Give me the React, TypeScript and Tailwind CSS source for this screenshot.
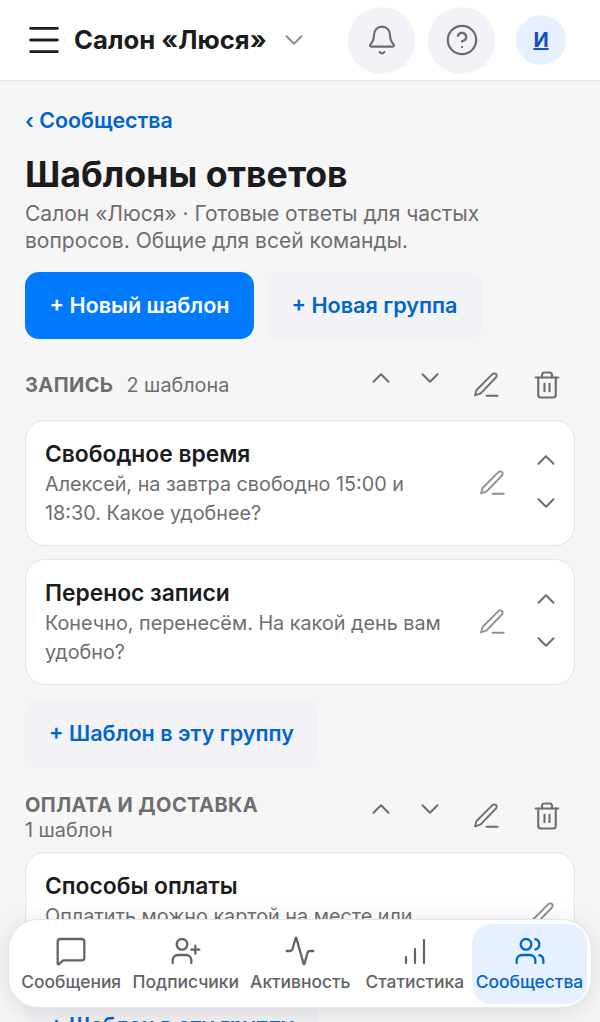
import { Bell, ChevronDown, ChevronUp, CircleHelp, Menu, MessageSquare, Trash2, UserPlus, Users, Activity } from 'lucide-react';

function Pencil({ className }: { className: string }) {
  return (
    <svg viewBox="0 0 24 24" fill="none" stroke="currentColor" strokeWidth="1.6" strokeLinecap="round" strokeLinejoin="round" className={className}>
      <path d="M17.5 2.6a2.1 2.1 0 0 1 3 3L7.4 19.2 2.6 21l1.3-4.7z" />
      <path d="M12.5 21.2h9.5" />
    </svg>
  );
}

function GroupActions({ className = '' }: { className?: string }) {
  return (
    <div className={`flex items-center text-[#6e6e70] ${className}`}>
      <ChevronUp className="w-[30px] h-[30px] mr-[19px] -mt-[14px]" strokeWidth={1.6} />
      <ChevronDown className="w-[30px] h-[30px] mr-[27px] -mt-[14px]" strokeWidth={1.6} />
      <Pencil className="w-[28px] h-[28px] mr-[32px]" />
      <Trash2 className="w-[30px] h-[30px]" strokeWidth={1.7} />
    </div>
  );
}

function TemplateCard({ title, text, sortable = true }: { title: string; text: string; sortable?: boolean }) {
  return (
    <div className="flex items-center bg-white border border-[#e5e5ea] rounded-[20px] pl-[19px] pr-[13px] h-[126px] mb-[13px]">
      <div className="flex-1 min-w-0 pt-[2px]">
        <div className="text-[22.8px] leading-[28px] font-semibold text-[#1c1c1e]">{title}</div>
        <div className="text-[19.8px] leading-[29px] text-[#6e6e70] mt-[2px] w-[405px]">{text}</div>
      </div>
      <Pencil className={`w-[28px] h-[28px] text-[#8e8e93] shrink-0 ${sortable ? 'mr-[25px]' : 'mr-[5px]'}`} />
      {sortable && (
        <div className="flex flex-col gap-[13px] text-[#6e6e70] shrink-0 -mt-[4px]">
          <ChevronUp className="w-[30px] h-[30px]" strokeWidth={1.6} />
          <ChevronDown className="w-[30px] h-[30px]" strokeWidth={1.6} />
        </div>
      )}
    </div>
  );
}

function NavItem({ label, active, children }: { label: string; active?: boolean; children: React.ReactNode }) {
  return (
    <div className={`flex flex-col items-center justify-center h-[80px] rounded-[20px] ${active ? 'bg-[#e6f0ff] text-[#0066cc] w-[115px]' : 'text-[#636366] flex-1'}`}>
      {children}
      <span className="text-[17.4px] leading-[20px] font-medium mt-[5px] whitespace-nowrap">{label}</span>
    </div>
  );
}

export default function App() {
  return (
    <div className="relative w-[600px] h-[1022px] overflow-hidden bg-[#f6f6f6] font-['Inter',sans-serif]">
      <header className="flex items-center h-[81px] bg-white border-b border-[#e5e5ea] pl-[24px] pr-[34px]">
        <Menu className="w-[40px] h-[40px] text-[#1c1c1e]" strokeWidth={1.7} />
        <span className="ml-[10px] text-[25.7px] font-bold text-[#1c1c1e] whitespace-nowrap">Салон «Люся»</span>
        <ChevronDown className="ml-[12px] w-[30px] h-[30px] text-[#8e8e93]" strokeWidth={1.6} />
        <div className="ml-auto flex items-center">
          <div className="flex items-center justify-center w-[67px] h-[67px] rounded-full bg-[#f2f2f7] text-[#6e6e70]">
            <Bell className="w-[32px] h-[32px]" strokeWidth={1.6} />
          </div>
          <div className="flex items-center justify-center w-[67px] h-[67px] rounded-full bg-[#f2f2f7] text-[#6e6e70] ml-[13px]">
            <CircleHelp className="w-[34px] h-[34px]" strokeWidth={1.6} />
          </div>
          <div className="flex items-center justify-center w-[50px] h-[50px] rounded-full bg-[#e6f0ff] ml-[21px] text-[20px] font-bold text-[#1a4fc4] underline">
            И
          </div>
        </div>
      </header>

      <main className="px-[25px] pt-[25px]">
        <div className="text-[21.4px] leading-[28px] font-semibold text-[#0066cc]">‹ Сообщества</div>
        <h1 className="mt-[19px] text-[35.7px] leading-[42px] font-bold text-[#1c1c1e]">Шаблоны ответов</h1>
        <p className="mt-[5px] text-[21px] leading-[27px] text-[#6e6e70] max-w-[500px]">
          Салон «Люся» · Готовые ответы для частых вопросов. Общие для всей команды.
        </p>

        <div className="flex gap-[13px] mt-[18px]">
          <button className="h-[67px] w-[229px] rounded-[14px] bg-[#007aff] text-white text-[21.6px] font-semibold">+ Новый шаблон</button>
          <button className="h-[67px] w-[215px] rounded-[14px] bg-[#f2f2f7] text-[#0066cc] text-[21.6px] font-semibold">+ Новая группа</button>
        </div>

        <div className="flex items-center justify-between mt-[27px] h-[38px] pr-[13px]">
          <div className="flex items-baseline">
            <span className="text-[20px] font-bold text-[#6e6e70] tracking-[0.4px]">ЗАПИСЬ</span>
            <span className="ml-[13px] text-[19.8px] text-[#6e6e70]">2 шаблона</span>
          </div>
          <GroupActions />
        </div>

        <div className="mt-[16px]">
          <TemplateCard title="Свободное время" text="Алексей, на завтра свободно 15:00 и 18:30. Какое удобнее?" />
          <TemplateCard title="Перенос записи" text="Конечно, перенесём. На какой день вам удобно?" />
        </div>

        <button className="mt-[1px] h-[68px] w-[293px] rounded-[14px] bg-[#f2f2f7] text-[#0066cc] text-[21.6px] font-semibold">+ Шаблон в эту группу</button>

        <div className="flex items-start justify-between mt-[26px] pr-[13px]">
          <div>
            <div className="text-[20px] leading-[24px] font-bold text-[#6e6e70] tracking-[0.4px]">ОПЛАТА И ДОСТАВКА</div>
            <div className="text-[19.8px] leading-[26px] text-[#6e6e70]">1 шаблон</div>
          </div>
          <GroupActions className="mt-[8px]" />
        </div>

        <div className="mt-[9px]">
          <TemplateCard title="Способы оплаты" text="Оплатить можно картой на месте или переводом." sortable={false} />
        </div>

        <button className="h-[68px] w-[293px] rounded-[14px] bg-[#f2f2f7] text-[#0066cc] text-[21.6px] font-semibold">+ Шаблон в эту группу</button>
      </main>

      <nav className="absolute left-[8px] top-[919px] flex items-center w-[584px] h-[89px] bg-white rounded-[30px] border border-[#e5e5ea] shadow-[0_4px_24px_rgba(0,0,0,0.12)] pl-[5px] pr-[4px]">
        <NavItem label="Сообщения">
          <MessageSquare className="w-[32px] h-[32px]" strokeWidth={1.7} />
        </NavItem>
        <NavItem label="Подписчики">
          <UserPlus className="w-[32px] h-[32px]" strokeWidth={1.7} />
        </NavItem>
        <NavItem label="Активность">
          <Activity className="w-[32px] h-[32px]" strokeWidth={1.7} />
        </NavItem>
        <NavItem label="Статистика">
          <svg viewBox="0 0 32 32" fill="none" stroke="currentColor" strokeWidth="2.2" strokeLinecap="round" className="w-[32px] h-[32px]">
            <path d="M7 28v-6M16 28V14M25 28V5" />
          </svg>
        </NavItem>
        <NavItem label="Сообщества" active>
          <Users className="w-[32px] h-[32px]" strokeWidth={1.7} />
        </NavItem>
      </nav>
    </div>
  );
}
